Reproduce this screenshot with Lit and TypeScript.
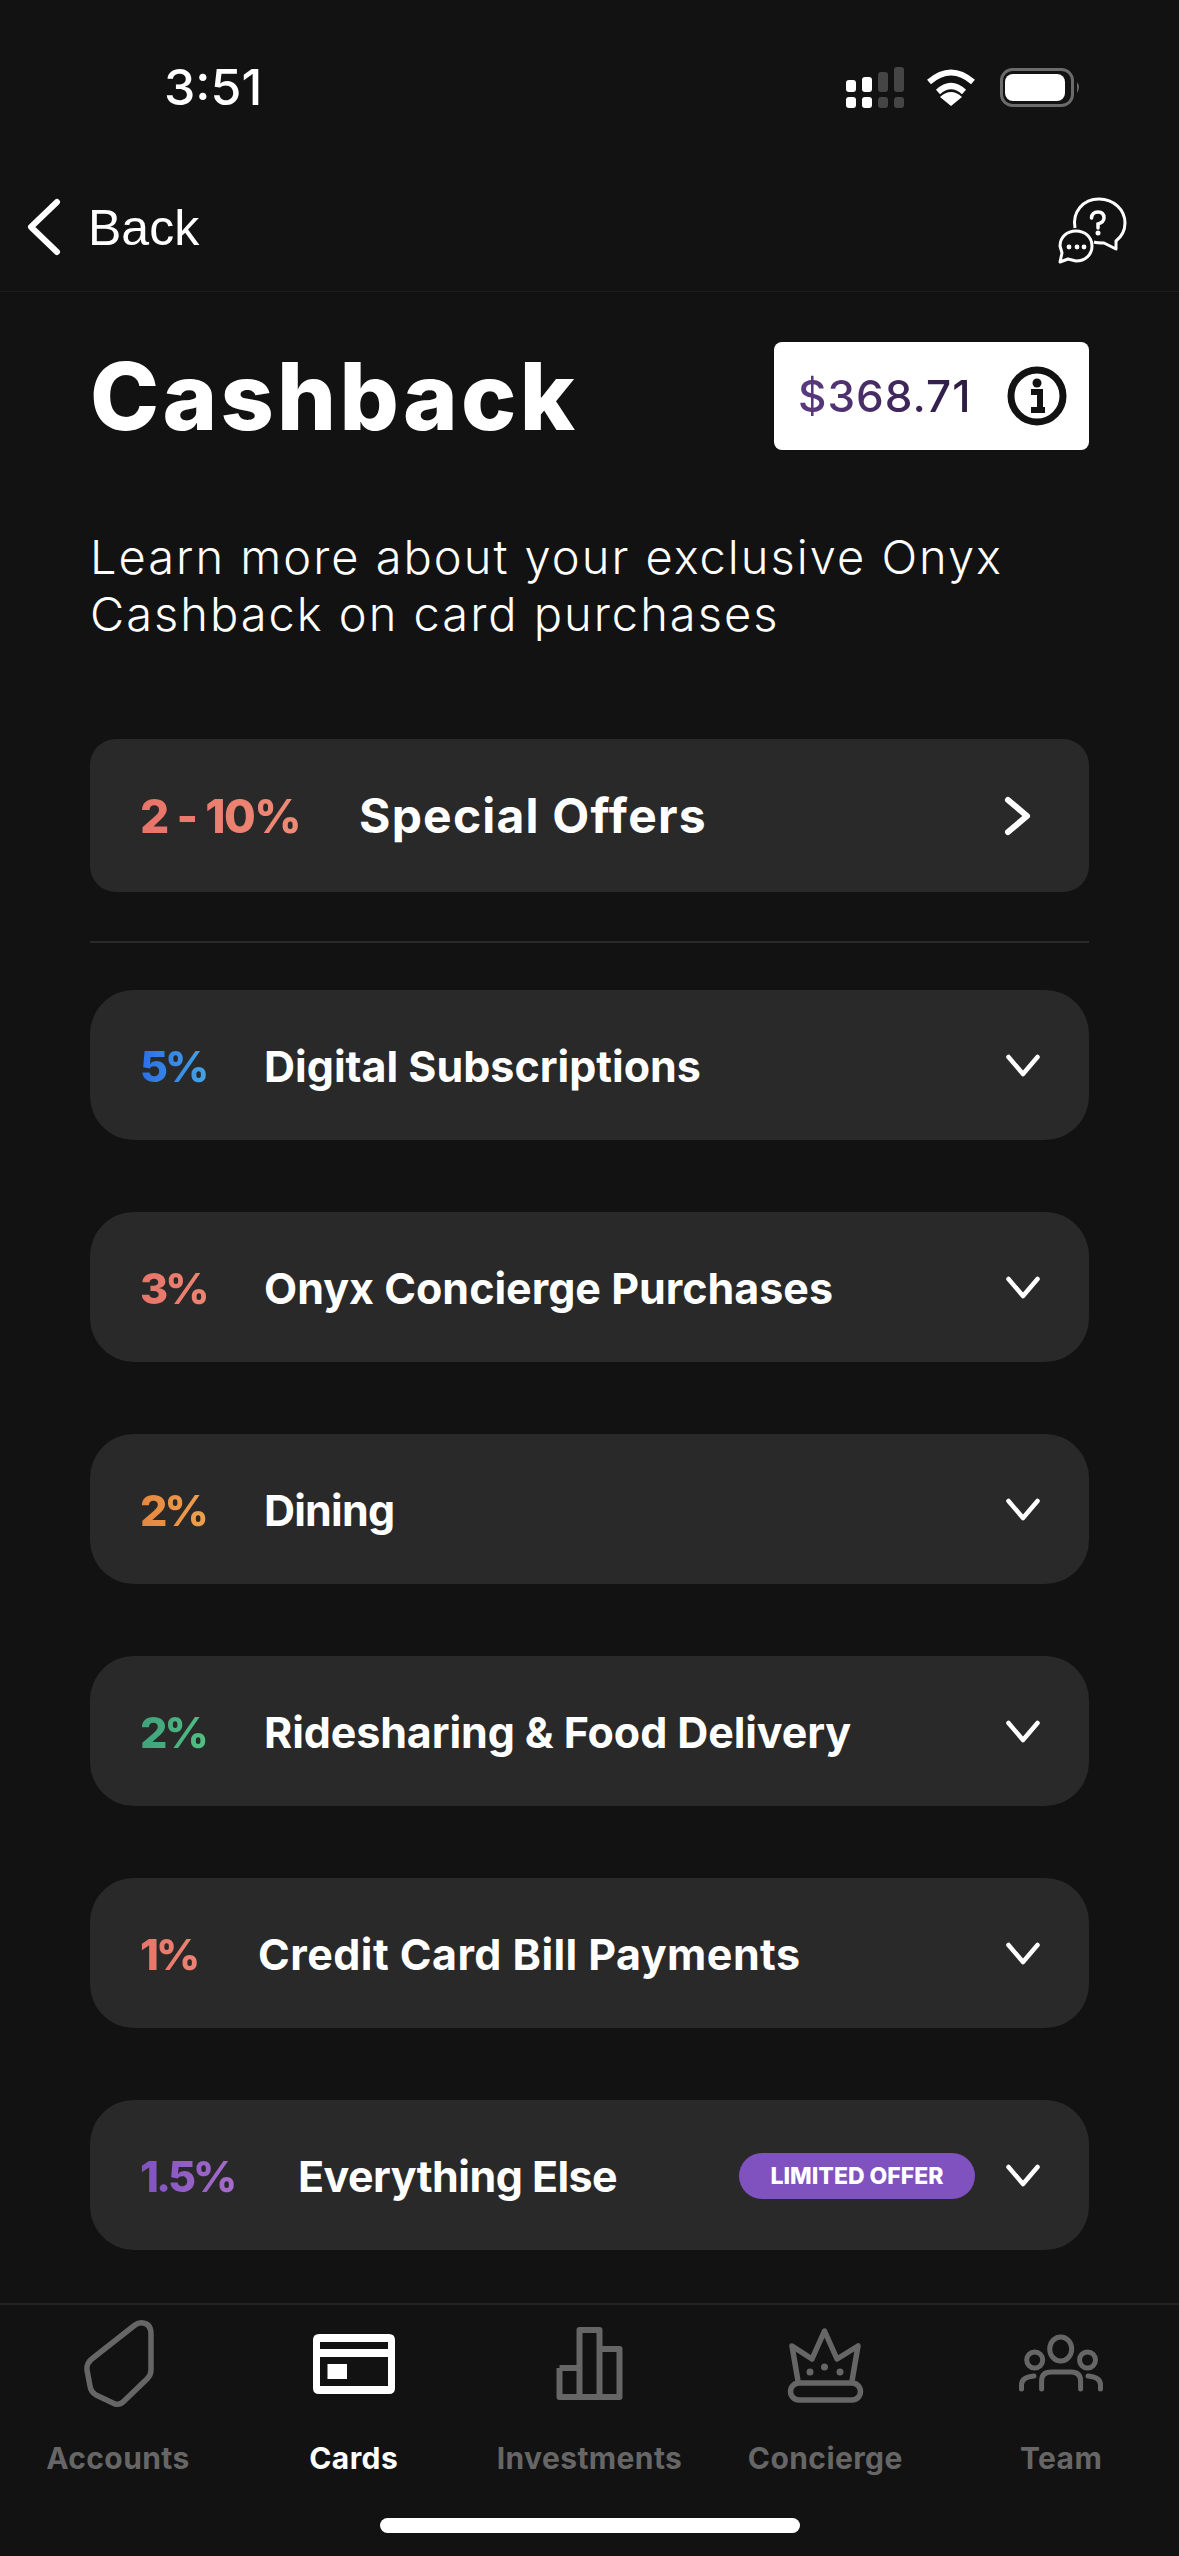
import { LitElement, html, css, svg } from 'lit';
import { customElement } from 'lit/decorators.js';

const rows = [
    { pct: '5%', title: 'Digital Subscriptions', grad: 'linear-gradient(90deg, #2b6fe8, #5ad0e0)', w: 124, ls: 0 },
    { pct: '3%', title: 'Onyx Concierge Purchases', grad: 'linear-gradient(90deg, #e8746a, #f0937a)', w: 124, ls: 0 },
    { pct: '2%', title: 'Dining', grad: 'linear-gradient(90deg, #e8863f, #eeb95a)', w: 124, ls: -0.8 },
    { pct: '2%', title: 'Ridesharing & Food Delivery', grad: 'linear-gradient(90deg, #3fa27c, #62d88a)', w: 124, ls: -0.1 },
    { pct: '1%', title: 'Credit Card Bill Payments', grad: 'linear-gradient(90deg, #e8746a, #f0937a)', w: 118, ls: 0.45 },
    { pct: '1.5%', title: 'Everything Else', grad: 'linear-gradient(90deg, #7f52c0, #c07ed0)', w: 158, ls: -0.55, badge: 'LIMITED OFFER' },
];

const tabs = [
    { label: 'Accounts', icon: svg`<path d="M58 6 L16 39 Q9 44 10 51 L13 67 Q14 73 19 76 L38 85 Q43 86 46 83 L70 60 Q74 56 74 51 V15 Q74 5 66 4 Q62 3 58 6 Z" fill="none" stroke="currentColor" stroke-width="5.5" stroke-linejoin="round"/>` },
    { label: 'Cards', active: true, icon: svg`<path fill-rule="evenodd" fill="currentColor" d="M6 15 H76 Q82 15 82 21 V69 Q82 75 76 75 H6 Q0 75 0 69 V21 Q0 15 6 15 Z M7 23 V30 H75 V23 Z M7 38 V67 H75 V38 Z"/><rect x="14.5" y="45" width="19.5" height="15" fill="currentColor"/>` },
    { label: 'Investments', icon: svg`<path d="M11.5 49 H31.5 M31.5 78 V11 H51.5 V78 M51.5 30 H71.5 V78 H11.5 V49" fill="none" stroke="currentColor" stroke-width="6" stroke-linejoin="round"/>` },
    { label: 'Concierge', icon: svg`<g fill="none" stroke="currentColor" stroke-width="5.5" stroke-linejoin="round"><path d="M14 62 L8 27 L28 40 L40.5 12 L53 40 L74 27 L68 62"/><rect x="6.5" y="64" width="70" height="17" rx="8.5"/></g><circle cx="26" cy="53" r="3.5" fill="currentColor"/><circle cx="40.5" cy="48" r="3.5" fill="currentColor"/><circle cx="56" cy="53" r="3.5" fill="currentColor"/>` },
    { label: 'Team', icon: svg`<g fill="none" stroke="currentColor" stroke-width="5" stroke-linecap="round"><ellipse cx="40.7" cy="30" rx="11" ry="12"/><circle cx="14.7" cy="41" r="8"/><circle cx="67.5" cy="41" r="8"/><path d="M21.6 70 V62 Q21.6 53 31 53 H51 Q60.6 53 60.6 62 V70"/><path d="M1.5 70 V66 Q1.5 58 14 57"/><path d="M80.5 70 V66 Q80.5 58 68 57"/></g>` },
];

@customElement('app-root')
export class AppRoot extends LitElement {
    static override styles = css`
    :host {
      display: block;
      width: 1179px;
      height: 2556px;
      background: #121212;
      color: #fff;
      font-family: 'Inter', 'Liberation Sans', sans-serif;
      overflow: hidden;
    }
    .page {
      height: 2556px;
      display: flex;
      flex-direction: column;
    }
    .status {
      height: 170px;
      flex: none;
      box-sizing: border-box;
      padding: 62px 93px 0 164px;
      display: flex;
      justify-content: space-between;
      align-items: flex-start;
    }
    .time {
      font: 500 50px/50px 'Inter', sans-serif;
    }
    .status-icons {
      margin: 5px 0 0;
      display: flex;
      align-items: center;
    }
    .nav {
      height: 122px;
      flex: none;
      box-sizing: border-box;
      border-bottom: 1px solid #1c1c1c;
      display: flex;
      justify-content: space-between;
      align-items: flex-start;
      padding: 26px 50px 0 26px;
    }
    .back {
      display: flex;
      align-items: center;
      gap: 26px;
      font: 400 50px/60px 'Liberation Sans', sans-serif;
    }
    .back span { padding-top: 2px; }
    .content {
      flex: 1;
      padding: 0 90px;
    }
    .head {
      display: flex;
      justify-content: space-between;
      align-items: center;
      height: 108px;
      margin-top: 50px;
    }
    h1 {
      margin: 0;
      font: 800 93px/108px 'Inter', sans-serif;
      letter-spacing: 3.3px;
    }
    .balance {
      width: 315px;
      height: 108px;
      box-sizing: border-box;
      padding: 0 22px 0 24px;
      background: #fff;
      border-radius: 8px;
      display: flex;
      justify-content: space-between;
      align-items: center;
    }
    .amount {
      background-image: linear-gradient(90deg, #5b3a80, #2b1a40);
      background-clip: text;
      -webkit-background-clip: text;
      color: transparent;
      font: 500 44px/1 'Inter', sans-serif;
      letter-spacing: 1px;
    }
    .intro {
      margin: 78px 0 0;
      font: 300 47px/57px 'Inter', sans-serif;
      letter-spacing: 2px;
    }
    .offer {
      margin-top: 97px;
      height: 153px;
      background: #292929;
      border-radius: 26px;
      display: flex;
      align-items: center;
      padding: 0 56px 0 50px;
      box-sizing: border-box;
    }
    .grad {
      background-clip: text;
      -webkit-background-clip: text;
      color: transparent;
      font: 800 46px/1 'Inter', sans-serif;
      letter-spacing: -1.5px;
      flex: none;
    }
    .offer .grad { width: 219px; }
    .offer .label {
      flex: 1;
      font: 700 48px/1 'Inter', sans-serif;
      letter-spacing: 1.2px;
    }
    hr {
      margin: 49px 0 47px;
      border: 0;
      height: 2px;
      background: #2a2a2a;
    }
    .rows {
      display: flex;
      flex-direction: column;
      gap: 72px;
    }
    .row {
      height: 150px;
      box-sizing: border-box;
      background: #292929;
      border-radius: 44px;
      display: flex;
      align-items: center;
      padding: 2px 49px 0 50px;
    }
    .row .label {
      flex: 1;
      font: 700 43px/1 'Inter', sans-serif;
    }
    .row .grad {
      font-size: 43px;
      letter-spacing: -3px;
    }
    .badge {
      height: 46px;
      width: 236px;
      margin-right: 31px;
      border-radius: 23px;
      background: #7f52c0;
      display: flex;
      align-items: center;
      justify-content: center;
      font: 800 23px/1 'Inter', sans-serif;
    }
    .tabs {
      flex: none;
      height: 253px;
      box-sizing: border-box;
      border-top: 2px solid #232323;
      position: relative;
      display: grid;
      grid-template-columns: repeat(5, 1fr);
      padding: 14px 0 0 0;
      margin: 0;
    }
    .tab {
      display: flex;
      flex-direction: column;
      align-items: center;
      color: #666;
      font: 700 30px/36px 'Inter', sans-serif;
      letter-spacing: 0.4px;
      gap: 33px;
    }
    .tab.active { color: #fff; }
    .tab svg {
      width: 88px;
      height: 88px;
      overflow: visible;
    }
    .home-bar {
      position: absolute;
      left: 380px;
      top: 213px;
      width: 420px;
      height: 15px;
      background: #fff;
      border-radius: 8px;
    }
    `;

    private chevronDown() {
        return html`<svg width="34" height="24" viewBox="0 0 34 24"><path d="M2.5 3 L17 20 L31.5 3" fill="none" stroke="#fff" stroke-width="4.5" stroke-linecap="round" stroke-linejoin="round"/></svg>`;
    }

    override render() {
        return html`
      <div class="page">
        <div class="status">
          <div class="time">3:51</div>
          <div class="status-icons">
            <svg width="240" height="42" viewBox="0 0 240 42">
              <g fill="#fff">
                <rect x="0" y="13" width="10" height="12" rx="3"/><rect x="0" y="30" width="10" height="11" rx="3"/>
                <rect x="16" y="10" width="10" height="15" rx="3"/><rect x="16" y="30" width="10" height="11" rx="3"/>
              </g>
              <g fill="#454545">
                <rect x="32" y="5" width="10" height="20" rx="3"/><rect x="32" y="30" width="10" height="11" rx="3"/>
                <rect x="48" y="0" width="10" height="25" rx="3"/><rect x="48" y="30" width="10" height="11" rx="3"/>
              </g>
              <g fill="none" stroke="#fff" stroke-width="6">
                <path d="M83 15 Q105 -4 127 15"/>
                <path d="M92 25 Q105 13 118 25"/>
              </g>
              <path d="M105 39 L94 30 Q105 20 116 30 Z" fill="#fff"/>
              <rect x="155.5" y="2.5" width="71" height="36" rx="11" fill="none" stroke="#6b6b6b" stroke-width="3"/>
              <rect x="159" y="7" width="60" height="27" rx="8" fill="#fff"/>
              <path d="M231 15 Q235 20 231 26 Z" fill="#6b6b6b"/>
            </svg>
          </div>
        </div>

        <div class="nav">
          <div class="back">
            <svg width="36" height="58" viewBox="0 0 36 58"><path d="M31 4 L5 29 L31 54" fill="none" stroke="#fff" stroke-width="6" stroke-linecap="round" stroke-linejoin="round"/></svg>
            <span>Back</span>
          </div>
          <svg width="72" height="70" viewBox="0 0 72 70">
            <path d="M18 32 C15 16 26 3 42 3 C57 3 68 14 68 27 C68 35 64 41 59 45 L59 53 L47 47 C43 47 40 47 37 46" fill="none" stroke="#fff" stroke-width="3" stroke-linejoin="round"/>
            <path d="M34.5 22 Q35 16 41 16 Q47 16 47 22 Q47 26 41 28 V32" fill="none" stroke="#fff" stroke-width="3.5" stroke-linecap="round"/>
            <circle cx="41" cy="37" r="2.5" fill="#fff"/>
            <path d="M3 50 C3 41 10 35 19 35 C28 35 35 41 35 50 C35 59 28 65 19 65 L11 63 L3 66 L5 57 Z" fill="#121212" stroke="#fff" stroke-width="3" stroke-linejoin="round"/>
            <circle cx="12" cy="51" r="2.4" fill="#fff"/><circle cx="20" cy="51" r="2.4" fill="#fff"/><circle cx="27" cy="51" r="2.4" fill="#fff"/>
          </svg>
        </div>

        <div class="content">
          <div class="head">
            <h1>Cashback</h1>
            <div class="balance">
              <span class="amount">$368.71</span>
              <svg width="60" height="60" viewBox="0 0 60 60">
                <circle cx="30" cy="30" r="26" fill="none" stroke="#121212" stroke-width="7"/>
                <circle cx="30" cy="17" r="4.5" fill="#121212"/>
                <path d="M24 26 H33 V42 M24 44 H38" fill="none" stroke="#121212" stroke-width="6"/>
              </svg>
            </div>
          </div>
          <p class="intro">Learn more about your exclusive Onyx<br />Cashback on card purchases</p>

          <div class="offer">
            <span class="grad" style="background-image:linear-gradient(90deg,#e8746a,#f0937a)">2 - 10%</span>
            <span class="label">Special Offers</span>
            <svg width="30" height="40" viewBox="0 0 30 40"><path d="M5 4 L24 20 L5 36" fill="none" stroke="#fff" stroke-width="6" stroke-linecap="round" stroke-linejoin="round"/></svg>
          </div>
          <hr />

          <div class="rows">
            ${rows.map(
            (r) => html`
              <div class="row">
                <span class="grad" style="background-image:${r.grad};width:${r.w}px">${r.pct}</span>
                <span class="label" style="letter-spacing:${r.ls}px">${r.title}</span>
                ${r.badge ? html`<span class="badge">${r.badge}</span>` : ''}
                ${this.chevronDown()}
              </div>
            `
        )}
          </div>
        </div>

        <div class="tabs">
          ${tabs.map(
            (t) => html`
            <div class="tab ${t.active ? 'active' : ''}">
              <svg viewBox="0 0 82 88">${t.icon}</svg>
              <span>${t.label}</span>
            </div>
          `
        )}
          <div class="home-bar"></div>
        </div>
      </div>
    `;
    }
}
